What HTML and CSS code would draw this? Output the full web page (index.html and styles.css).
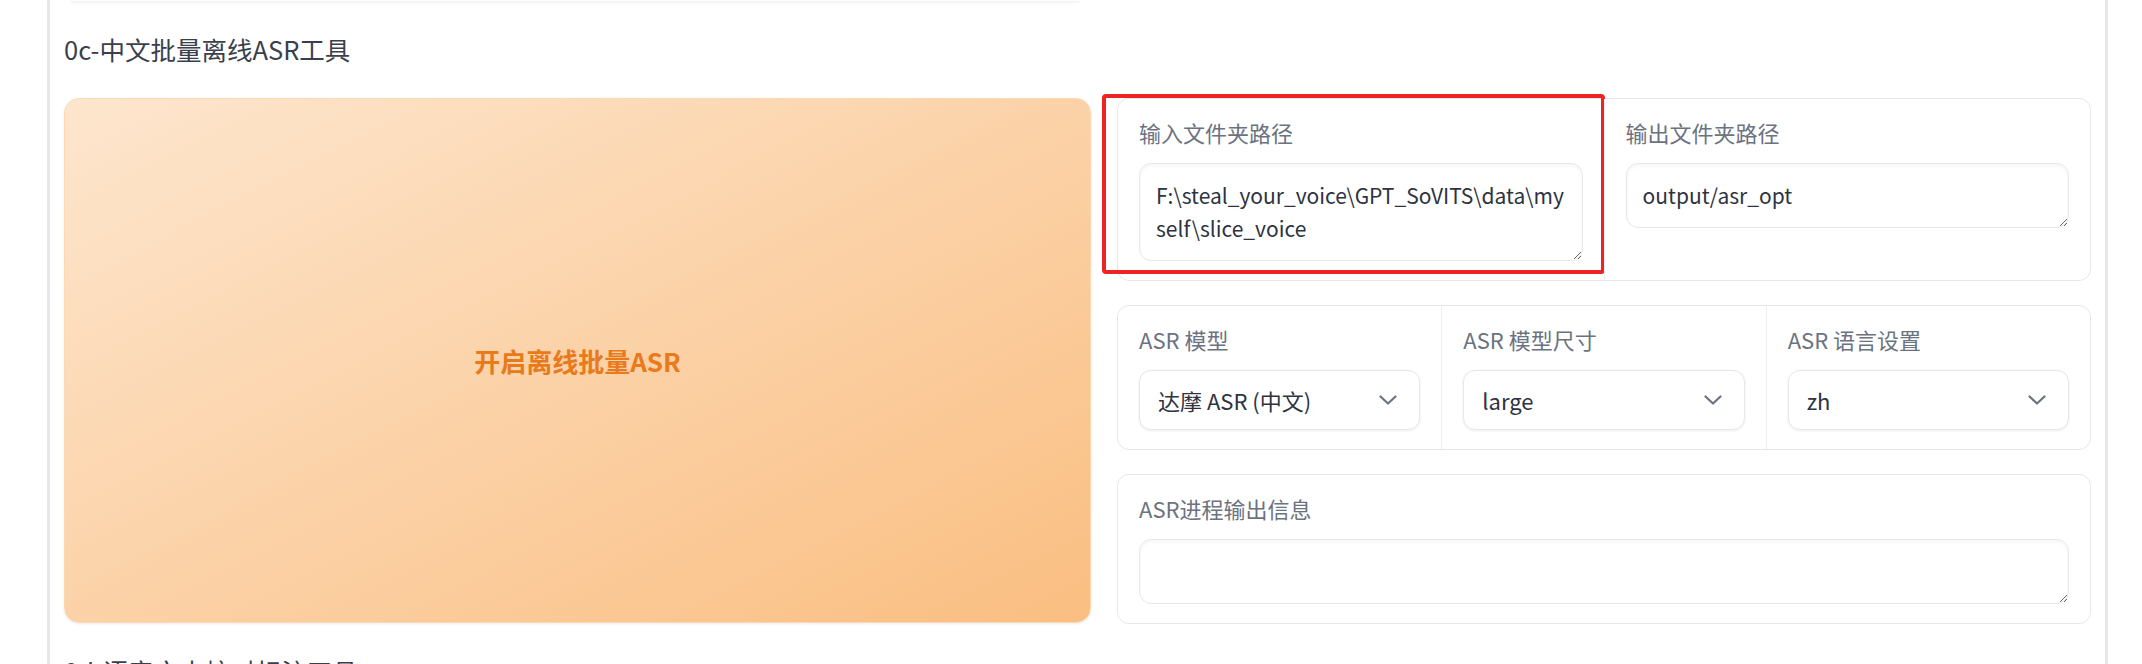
FILE: index.html
```html
<!DOCTYPE html>
<html lang="zh-CN">
<head>
<meta charset="utf-8">
<title>0c-中文批量离线ASR工具</title>
<link rel="stylesheet" href="styles.css">
</head>
<body>
<div class="frame">
  <div class="prev-card"></div>
  <div class="section-title">0c-中文批量离线ASR工具</div>
  <div class="row">
    <button class="run-btn" type="button">开启离线批量ASR</button>
    <div class="side">
      <div class="form">
        <div class="block">
          <div class="block-label">输入文件夹路径</div>
          <textarea class="field" rows="2" spellcheck="false">F:\steal_your_voice\GPT_SoVITS\data\my
self\slice_voice</textarea>
          <div class="highlight"></div>
        </div>
        <div class="block sep">
          <div class="block-label">输出文件夹路径</div>
          <textarea class="field" rows="1" spellcheck="false">output/asr_opt</textarea>
        </div>
      </div>
      <div class="form">
        <div class="block">
          <div class="block-label">ASR 模型</div>
          <div class="select"><span>达摩 ASR (中文)</span><svg class="chev" viewBox="0 0 18 10" width="18" height="10"><polyline points="1.5,1.5 9,8.5 16.5,1.5"/></svg></div>
        </div>
        <div class="block sep">
          <div class="block-label">ASR 模型尺寸</div>
          <div class="select"><span>large</span><svg class="chev" viewBox="0 0 18 10" width="18" height="10"><polyline points="1.5,1.5 9,8.5 16.5,1.5"/></svg></div>
        </div>
        <div class="block sep">
          <div class="block-label">ASR 语言设置</div>
          <div class="select"><span>zh</span><svg class="chev" viewBox="0 0 18 10" width="18" height="10"><polyline points="1.5,1.5 9,8.5 16.5,1.5"/></svg></div>
        </div>
      </div>
      <div class="form">
        <div class="block">
          <div class="block-label">ASR进程输出信息</div>
          <textarea class="field" rows="1" spellcheck="false"></textarea>
        </div>
      </div>
    </div>
  </div>
  <div class="section-title">0d-语音文本校对标注工具</div>
</div>
</body>
</html>
```
FILE: styles.css
```css
html, body {
  margin: 0;
  padding: 0;
  background: #ffffff;
  height: 664px;
  overflow: hidden;
}
body {
  font-family: "Noto Sans CJK SC", "Noto Sans", sans-serif;
  color: #374151;
}
.frame {
  margin-left: 47px;
  width: 2061px;
  height: 664px;
  border-left: 3px solid #e5e7eb;
  border-right: 3px solid #e5e7eb;
  padding: 0 14px;
  box-sizing: border-box;
}
.prev-card {
  margin-left: 6px;
  width: 1010px;
  height: 1px;
  background: #ffffff;
  border-bottom: 1px solid #f1f2f4;
  box-shadow: 0 1px 3px rgba(0, 0, 0, 0.06);
  border-radius: 0 0 6px 6px;
}
.section-title {
  margin-top: 31px;
  font-size: 25.5px;
  line-height: 32px;
  color: #3a3f4b;
}
.row {
  display: flex;
  gap: 26px;
  margin-top: 33px;
}
.run-btn {
  flex: 0 0 1027px;
  height: 525px;
  border: 1px solid #fcd9b3;
  border-radius: 15px;
  background: linear-gradient(to bottom right, #fde6ce, #fabe81);
  box-shadow: 0 1px 3px rgba(0, 0, 0, 0.08);
  font-family: "Noto Sans CJK SC", "Noto Sans", sans-serif;
  font-size: 26px;
  font-weight: 700;
  color: #e97a1c;
  padding: 0;
  cursor: pointer;
}
.side {
  flex: 1;
  display: flex;
  flex-direction: column;
  gap: 24px;
}
.form {
  display: flex;
  border: 1px solid #e5e7eb;
  border-radius: 12px;
  background: #ffffff;
}
.block {
  flex: 1;
  position: relative;
  padding: 20px 21px 19px;
  min-width: 0;
}
.block.sep {
  border-left: 1px solid #eceef1;
}
.block-label {
  font-size: 22px;
  line-height: 26px;
  color: #6b7280;
  margin-bottom: 18px;
}
.field {
  display: block;
  width: 100%;
  box-sizing: border-box;
  border: 1px solid #e5e7eb;
  border-radius: 12px;
  padding: 15px 16px;
  font-family: "Noto Sans CJK SC", "Noto Sans", sans-serif;
  font-size: 21px;
  line-height: 33px;
  color: #2d3340;
  background: #ffffff;
  box-shadow: inset 0 2px 4px rgba(0, 0, 0, 0.04);
  resize: vertical;
  outline: none;
  overflow: hidden;
  white-space: pre;
}
.select {
  height: 60px;
  box-sizing: border-box;
  border: 1px solid #e5e7eb;
  border-radius: 12px;
  box-shadow: 0 1px 3px rgba(0, 0, 0, 0.07);
  background: #ffffff;
  display: flex;
  align-items: center;
  justify-content: space-between;
  padding: 0 22px 0 18px;
  font-size: 22px;
  color: #2d3340;
}
.chev {
  fill: none;
  stroke: #6b7280;
  stroke-width: 2.2;
  stroke-linecap: round;
  stroke-linejoin: round;
}
.highlight {
  position: absolute;
  left: -16px;
  top: -5px;
  width: 503px;
  height: 180px;
  box-sizing: border-box;
  border: 4px solid #ef2323;
  border-radius: 4px;
  pointer-events: none;
}
```
